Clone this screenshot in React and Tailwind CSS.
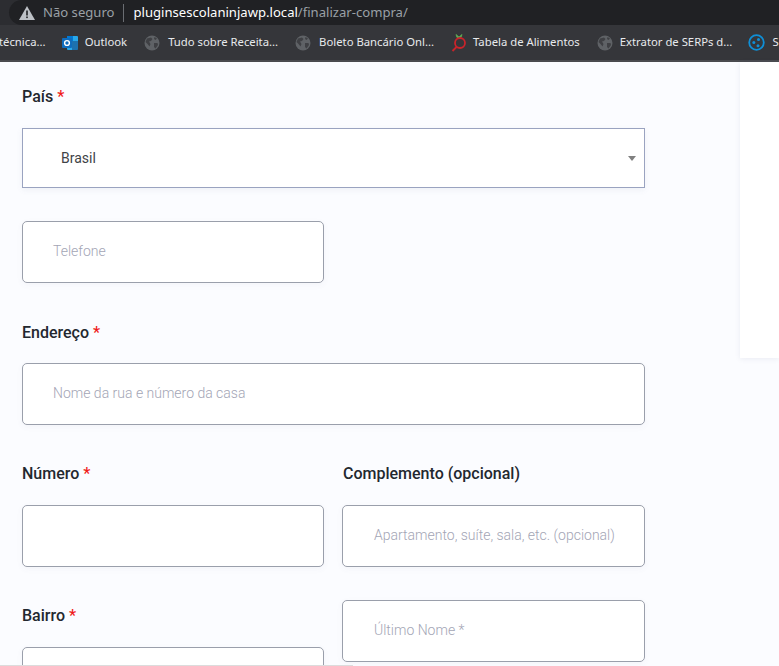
const Globe = () => (
  <svg width="16" height="16" viewBox="0 0 16 16" className="shrink-0">
    <circle cx="8" cy="8" r="7.5" fill="#5f6266" />
    <path d="M3 3.5 L7 2.5 L8.5 4 L7 6 L5 6.5 L6.5 9 L5.5 11.5 L3.5 9 L1.5 7 Z M10 8 L13.5 8 L14 10 L11.5 13.5 L10 12 Z M10.5 2 L13 3.5 L11.5 5 L10 4 Z" fill="#3f4044" />
  </svg>
);

const Outlook = () => (
  <svg width="16" height="16" viewBox="0 0 16 16" className="shrink-0">
    <rect x="5" y="1" width="11" height="14" rx="1" fill="#28a8ea" />
    <rect x="5" y="1" width="6" height="5" fill="#0078d4" />
    <rect x="10" y="6" width="6" height="9" fill="#14447d" opacity="0.55" />
    <rect x="0" y="3" width="10" height="10" rx="1" fill="#0f6cbd" />
    <circle cx="5" cy="8" r="2.4" fill="none" stroke="#fff" strokeWidth="1.4" />
  </svg>
);

const Tomato = () => (
  <svg width="16" height="18" viewBox="0 0 16 18" className="shrink-0">
    <path d="M5 0.5 L8 3 L8 4 L6 3.5 Z M11 0.5 L8 3 L8 4 L10 3.5 Z" fill="#5fae57" stroke="#5fae57" strokeWidth="0.8" />
    <circle cx="9" cy="9" r="5" fill="none" stroke="#c9242b" strokeWidth="1.8" />
    <path d="M5.5 13 L1.5 17" stroke="#c9242b" strokeWidth="1.8" />
  </svg>
);

const Dots = () => (
  <svg width="17" height="17" viewBox="0 0 17 17" className="shrink-0">
    <circle cx="8.5" cy="8.5" r="7.3" fill="none" stroke="#0f8fd6" strokeWidth="1.8" />
    <circle cx="10.5" cy="5.5" r="1.5" fill="#0f8fd6" />
    <circle cx="5.8" cy="8.5" r="1.5" fill="#0f8fd6" />
    <circle cx="10" cy="11.8" r="1.5" fill="#0f8fd6" />
  </svg>
);

const Bookmark = ({ icon, label, className }) => (
  <div className={`flex items-center shrink-0 ${className}`}>
    {icon}
    <span className="whitespace-nowrap">{label}</span>
  </div>
);

const Label = ({ text, className }) => (
  <div className={`font-medium text-base leading-5 text-[#23282f] ${className || ""}`}>
    {text} <span className="text-[#f01a1a]">*</span>
  </div>
);

const Field = ({ placeholder, className }) => (
  <div className={`h-[62px] bg-white border border-[#9a9fab] rounded-[5px] pb-[2px] flex items-center text-sm font-light text-[#a3a5b5] whitespace-nowrap shadow-[0_2px_6px_rgba(90,100,140,0.05)] ${className}`}>
    {placeholder}
  </div>
);

export default function App() {
  return (
    <div className="relative h-[666px] w-[779px] overflow-hidden flex flex-col bg-[#fbfcff] font-['Roboto',sans-serif]">
      <div className="h-[25px] bg-[#2c2d31] shrink-0 pl-[9px]">
        <div className="h-full bg-[#202124] rounded-l-[13px] flex items-center pl-[10px] font-['Noto_Sans',sans-serif] text-[13.1px]">
          <svg width="16" height="14" viewBox="0 0 16 14" className="shrink-0">
            <path d="M8 0 L16 14 L0 14 Z" fill="#bdc1c6" />
            <rect x="7.2" y="4.5" width="1.6" height="5" fill="#202124" />
            <rect x="7.2" y="10.5" width="1.6" height="1.6" fill="#202124" />
          </svg>
          <span className="ml-2 text-[#9aa0a6]">Não seguro</span>
          <span className="ml-2 h-[18px] w-px bg-[#6a6d72]" />
          <span className="ml-[10px] text-white">pluginsescolaninjawp.local</span>
          <span className="text-[#9aa0a6]">/finalizar-compra/</span>
        </div>
      </div>
      <div className="h-[37px] bg-[#35363a] border-b-2 border-[#4a4b4f] flex items-center text-[11.3px] text-[#e8eaed] overflow-hidden font-['Noto_Sans',sans-serif] shrink-0">
        <span className="-ml-px whitespace-nowrap shrink-0">técnica...</span>
        <Bookmark className="ml-4 gap-[7px]" icon={<Outlook />} label="Outlook" />
        <Bookmark className="ml-[17px] gap-2" icon={<Globe />} label="Tudo sobre Receita..." />
        <Bookmark className="ml-[17px] gap-2" icon={<Globe />} label="Boleto Bancário Onl..." />
        <Bookmark className="ml-[17px] gap-[6px]" icon={<Tomato />} label="Tabela de Alimentos" />
        <Bookmark className="ml-[17px] gap-[7px]" icon={<Globe />} label="Extrator de SERPs d..." />
        <Bookmark className="ml-4 gap-[7px]" icon={<Dots />} label="S" />
      </div>
      <div className="flex-1 flex items-start min-h-0">
        <div className="w-[645px] pl-[22px] pt-[25px] shrink-0">
          <Label text="País" />
          <div className="mt-[21px] h-[60px] bg-white border border-[#9aa3c0] pl-[38px] pr-[8px] flex items-center justify-between text-sm text-[#3f4347] shadow-[0_2px_6px_rgba(90,100,140,0.08)]">
            <span>Brasil</span>
            <span className="w-0 h-0 border-x-4 border-x-transparent border-t-[5px] border-t-[#808080]" />
          </div>
          <Field placeholder="Telefone" className="mt-[33px] w-[302px] pl-[30px]" />
          <Label text="Endereço" className="mt-[40px]" />
          <Field placeholder="Nome da rua e número da casa" className="mt-[20px] pl-[30px]" />
          <div className="mt-[39px] grid grid-cols-[302px_303px] gap-x-[18px]">
            <div>
              <Label text="Número" />
              <Field placeholder="" className="mt-[21px] pl-[30px]" />
            </div>
            <div>
              <div className="ml-px font-medium text-base leading-5 text-[#23282f]">Complemento (opcional)</div>
              <Field placeholder="Apartamento, suíte, sala, etc. (opcional)" className="mt-[21px] pl-[31px]" />
            </div>
            <div className="mt-[39px]">
              <Label text="Bairro" />
              <Field placeholder="" className="mt-[21px] pl-[30px]" />
            </div>
            <div className="mt-[33px]">
              <Field placeholder="Último Nome *" className="pl-[31px]" />
            </div>
          </div>
        </div>
        <div className="ml-[95px] w-[39px] h-[296px] bg-white shrink-0 shadow-[0_1px_5px_rgba(90,100,140,0.1)]" />
      </div>
      <div className="absolute left-0 bottom-0 h-px w-[353px] bg-[#dcdcdc]" />
    </div>
  );
}
